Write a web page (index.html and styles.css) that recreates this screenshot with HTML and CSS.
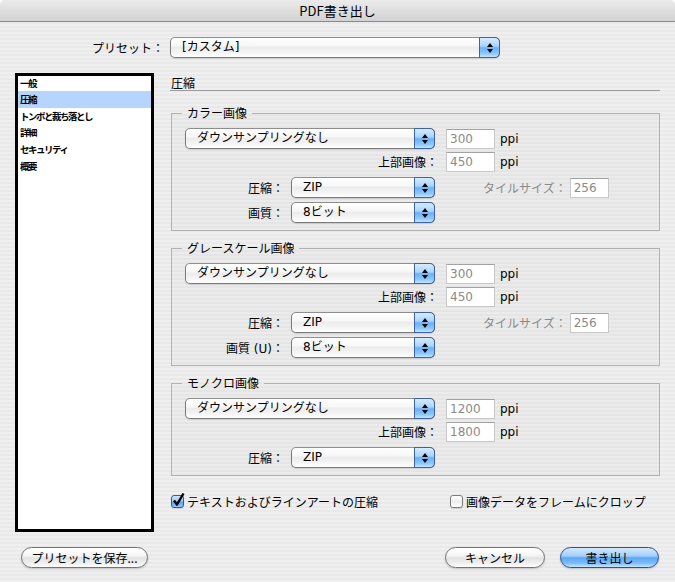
FILE: index.html
```html
<!DOCTYPE html>
<html lang="ja">
<head>
<meta charset="utf-8">
<title>PDF書き出し</title>
<link rel="stylesheet" href="styles.css">
</head>
<body>
<div class="window">
  <div class="titlebar">PDF書き出し</div>

  <div class="preset-row">
    <span class="preset-label">プリセット：</span>
    <div class="popup popup-preset"><span class="val">[カスタム]</span><span class="arr"></span></div>
  </div>

  <div class="main">
    <ul class="list">
      <li>一般</li>
      <li class="sel">圧縮</li>
      <li>トンボと裁ち落とし</li>
      <li>詳細</li>
      <li>セキュリティ</li>
      <li>概要</li>
    </ul>

    <div class="pane">
      <div class="pane-title">圧縮</div>

      <fieldset class="group">
        <legend>カラー画像</legend>
        <div class="row">
          <div class="popup w-wide"><span class="val">ダウンサンプリングなし</span><span class="arr"></span></div>
          <div class="field">300</div><span class="unit">ppi</span>
        </div>
        <div class="row r2">
          <span class="lbl lbl-wide">上部画像：</span>
          <div class="field">450</div><span class="unit">ppi</span>
        </div>
        <div class="row r3">
          <span class="lbl">圧縮：</span>
          <div class="popup w-mid"><span class="val">ZIP</span><span class="arr"></span></div>
          <span class="tile-lbl">タイルサイズ：</span><div class="field field-small">256</div>
        </div>
        <div class="row r4">
          <span class="lbl">画質：</span>
          <div class="popup w-mid"><span class="val">8ビット</span><span class="arr"></span></div>
        </div>
      </fieldset>

      <fieldset class="group group-next">
        <legend>グレースケール画像</legend>
        <div class="row">
          <div class="popup w-wide"><span class="val">ダウンサンプリングなし</span><span class="arr"></span></div>
          <div class="field">300</div><span class="unit">ppi</span>
        </div>
        <div class="row r2">
          <span class="lbl lbl-wide">上部画像：</span>
          <div class="field">450</div><span class="unit">ppi</span>
        </div>
        <div class="row r3">
          <span class="lbl">圧縮：</span>
          <div class="popup w-mid"><span class="val">ZIP</span><span class="arr"></span></div>
          <span class="tile-lbl">タイルサイズ：</span><div class="field field-small">256</div>
        </div>
        <div class="row r4">
          <span class="lbl">画質 (U)：</span>
          <div class="popup w-mid"><span class="val">8ビット</span><span class="arr"></span></div>
        </div>
      </fieldset>

      <fieldset class="group group-next">
        <legend>モノクロ画像</legend>
        <div class="row">
          <div class="popup w-wide"><span class="val">ダウンサンプリングなし</span><span class="arr"></span></div>
          <div class="field">1200</div><span class="unit">ppi</span>
        </div>
        <div class="row r2">
          <span class="lbl lbl-wide">上部画像：</span>
          <div class="field">1800</div><span class="unit">ppi</span>
        </div>
        <div class="row r3">
          <span class="lbl">圧縮：</span>
          <div class="popup w-mid"><span class="val">ZIP</span><span class="arr"></span></div>
        </div>
      </fieldset>

      <div class="checks">
        <label class="check">
          <span class="cb cb-on"><svg width="15" height="16" viewBox="0 0 15 16"><path d="M3 8.5 L6 12.5 L12.5 1.5" fill="none" stroke="#000" stroke-width="2.4" stroke-linejoin="round"/></svg></span>
          <span>テキストおよびラインアートの圧縮</span>
        </label>
        <label class="check">
          <span class="cb"></span>
          <span>画像データをフレームにクロップ</span>
        </label>
      </div>
    </div>
  </div>

  <div class="footer">
    <div class="btn btn-save">プリセットを保存...</div>
    <div class="spacer"></div>
    <div class="btn btn-cancel">キャンセル</div>
    <div class="btn btn-default">書き出し</div>
  </div>
</div>
</body>
</html>
```

FILE: styles.css
```css
* { box-sizing: border-box; }

html, body {
  margin: 0;
  padding: 0;
  background: #ffffff;
}

body {
  font-family: "DejaVu Sans", "Noto Sans CJK JP", sans-serif;
  font-size: 12px;
  color: #000;
}

.window {
  width: 675px;
  height: 582px;
  overflow: hidden;
  border-radius: 5px 5px 0 0;
  background: repeating-linear-gradient(to bottom, #efefef 0px, #efefef 2px, #e9e9e9 2px, #e9e9e9 4px);
}

.titlebar {
  height: 22px;
  line-height: 21px;
  text-align: center;
  font-size: 13px;
  font-family: "Noto Sans CJK JP", sans-serif;
  background: linear-gradient(to bottom, #ebebeb, #d2d2d2);
  border-bottom: 1px solid #8a8a8a;
}

/* preset row */
.preset-row {
  display: flex;
  align-items: center;
  margin-top: 15px;
  height: 21px;
}

.preset-label {
  width: 164px;
  text-align: right;
  font-family: "Noto Sans CJK JP", sans-serif;
}

.popup-preset {
  width: 330px;
  margin-left: 6px;
}

.popup-preset .val {
  padding-left: 13px;
}

/* popup */
.popup {
  display: flex;
  height: 21px;
  border: 1px solid #7a7a7a;
  border-top-color: #8e8e8e;
  border-radius: 5px;
  background: linear-gradient(to bottom, #ffffff 0%, #f7f7f7 40%, #ececec 50%, #f4f4f4 75%, #ffffff 100%);
  box-shadow: 0 1px 1px rgba(0, 0, 0, 0.12);
}

.popup .val {
  flex: 1;
  padding-left: 11px;
  line-height: 19px;
  white-space: nowrap;
}

.popup .arr {
  width: 21px;
  margin: -1px -1px -1px 0;
  border: 1px solid #3f62a0;
  border-radius: 0 5px 5px 0;
  background: linear-gradient(to bottom, #d6ebfe 0%, #acd4fb 42%, #6cb1f5 52%, #8ac6fb 80%, #c4e4ff 100%);
  display: flex;
  flex-direction: column;
  align-items: center;
  justify-content: center;
  gap: 2px;
}

.popup .arr::before {
  content: "";
  width: 0;
  height: 0;
  border-left: 3px solid transparent;
  border-right: 3px solid transparent;
  border-bottom: 4px solid #000;
}

.popup .arr::after {
  content: "";
  width: 0;
  height: 0;
  border-left: 3px solid transparent;
  border-right: 3px solid transparent;
  border-top: 4px solid #000;
}

.w-wide { width: 250px; }
.w-mid { width: 144px; }

/* main area */
.main {
  display: flex;
  margin-top: 15px;
}

.list {
  list-style: none;
  margin: 0 0 0 15px;
  padding: 0;
  width: 139px;
  height: 459px;
  border: 3px solid #000;
  background: #fff;
  font-family: "Noto Sans CJK JP", sans-serif;
  font-size: 9.5px;
  font-weight: 700;
  letter-spacing: -1.5px;
}

.list li {
  height: 16.7px;
  line-height: 16px;
  padding-left: 2px;
  white-space: nowrap;
}

.list li:first-child {
  height: 15px;
  line-height: 14px;
}

.list li.sel {
  background: #b5d5ff;
}

.pane {
  margin-left: 16px;
  width: 490px;
}

.pane-title {
  padding-top: 3px;
  padding-left: 1px;
  line-height: 14px;
  border-bottom: 1px solid #9c9c9c;
  font-family: "Noto Sans CJK JP", sans-serif;
}

/* group boxes */
.group {
  margin: 15px 0 0 1px;
  width: 489px;
  min-width: 0;
  padding: 8px 0 7px 13px;
  border: 1px solid #b2b2b2;
  background: rgba(0, 0, 0, 0.015);
}

.group-next {
  margin-top: 10px;
}

.group legend {
  margin-left: -3px;
  padding: 0 5px;
  line-height: 14px;
  font-family: "Noto Sans CJK JP", sans-serif;
}

.row {
  display: flex;
  align-items: center;
  height: 21px;
}

.r2 { margin-top: 2px; }
.r3 { margin-top: 5px; }
.r4 { margin-top: 4px; }

.lbl {
  width: 106px;
  padding-right: 7px;
  text-align: right;
  white-space: nowrap;
}

.lbl-wide {
  width: 253px;
  padding-right: 0;
}

.field {
  width: 49px;
  height: 20px;
  margin-left: 11px;
  padding: 1px 3px 0;
  border: 1px solid #c8c8c8;
  border-top-color: #a2a2a2;
  background: #fff;
  color: #8a8a8a;
  font-size: 12px;
  line-height: 16px;
}

.lbl-wide + .field {
  margin-left: 8px;
}

.unit {
  margin-left: 5px;
}

.tile-lbl {
  margin-left: 48px;
  color: #8a8a8a;
  white-space: nowrap;
}

.field-small {
  width: 39px;
  margin-left: 3px;
}

/* checkboxes */
.checks {
  display: grid;
  grid-template-columns: 279px auto;
  margin-top: 18px;
  padding-left: 1px;
}

.check {
  display: flex;
  align-items: center;
  height: 14px;
  gap: 3px;
  white-space: nowrap;
}

.cb {
  width: 13px;
  height: 13px;
  border: 1px solid #7c7c7c;
  border-radius: 3px;
  background: linear-gradient(to bottom, #ffffff, #ececec 50%, #ffffff);
  box-shadow: 0 1px 1px rgba(0, 0, 0, 0.15);
  display: flex;
  align-items: flex-end;
  justify-content: center;
  overflow: visible;
}

.cb-on {
  border-color: #35599a;
  background: linear-gradient(to bottom, #cfe7fd 0%, #9fcbf8 45%, #5aa5f2 55%, #8dc8fb 100%);
}

.cb-on svg {
  flex: none;
  margin-bottom: -1px;
  margin-left: 1px;
}

/* footer */
.footer {
  display: flex;
  align-items: center;
  margin-top: 15px;
  padding: 0 16px 0 21px;
  height: 21px;
}

.spacer { flex: 1; }

.btn {
  height: 21px;
  border: 1px solid #737373;
  border-radius: 11px;
  background: linear-gradient(to bottom, #ffffff 0%, #f5f5f5 40%, #e2e2e2 52%, #efefef 80%, #ffffff 100%);
  box-shadow: 0 1px 2px rgba(0, 0, 0, 0.2);
  display: flex;
  align-items: center;
  justify-content: center;
  font-family: "Noto Sans CJK JP", sans-serif;
  white-space: nowrap;
}

.btn-save { width: 127px; }
.btn-cancel { width: 100px; }

.btn-default {
  width: 99px;
  margin-left: 15px;
  border-color: #2c4f98;
  background: linear-gradient(to bottom, #d3e9fd 0%, #a4cff8 42%, #5ca7f4 52%, #7dbdfa 80%, #c7e6ff 100%);
}
```
